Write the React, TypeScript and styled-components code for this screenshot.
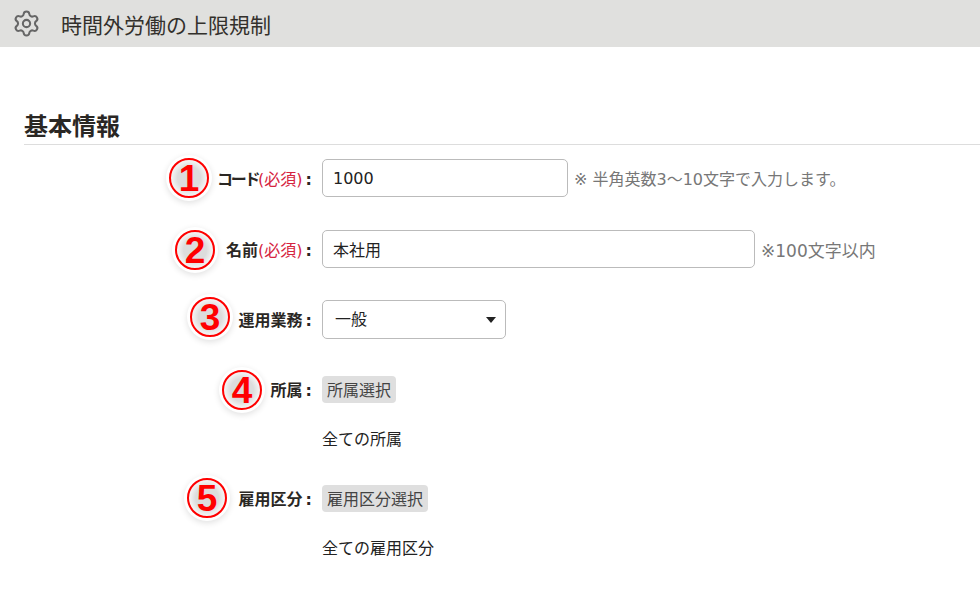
import React from 'react'
import styled, { createGlobalStyle } from 'styled-components'
import { Settings } from 'lucide-react'

const GlobalStyle = createGlobalStyle`
  html, body {
    margin: 0;
    padding: 0;
    background: #fff;
    overflow: hidden;
  }

  body {
    font-family: "DejaVu Sans", "Noto Sans CJK JP", sans-serif;
    color: #222;
  }
`

const Header = styled.header`
  display: flex;
  align-items: center;
  height: 47px;
  padding-left: 12px;
  background: #e0e0de;
`

const GearIcon = styled(Settings)`
  width: 29px;
  height: 29px;
  color: #666;
  margin-right: 20px;
`

const PageTitle = styled.h1`
  margin: 0;
  font-size: 21px;
  font-weight: 400;
  color: #33302c;
`

const Main = styled.main`
  padding: 61px 0 0 24px;
`

const SectionTitle = styled.h2`
  margin: 0 0 13px;
  height: 36px;
  line-height: 38px;
  font-size: 24px;
  font-weight: 700;
  color: #2a2724;
  border-bottom: 1px solid #ddd;
`

const Form = styled.form`
  display: flex;
  flex-direction: column;
`

const Row = styled.div<{ $top?: number }>`
  display: grid;
  grid-template-columns: 288px auto;
  column-gap: 10px;
  align-items: center;
  justify-content: start;
  height: 40px;
  margin-top: ${props => props.$top ?? 0}px;
`

const Label = styled.label`
  display: flex;
  justify-content: flex-end;
  font-size: 16px;
  font-weight: 700;
  color: #2a2724;
`

const LabelText = styled.span`
  position: relative;
  white-space: nowrap;
`

const Colon = styled.span`
  margin-left: 3px;
`

const Kana = styled.span`
  letter-spacing: -2.3px;
`

const Required = styled.span`
  font-weight: 400;
  color: #d6243f;
`

const Badge = styled.span<{ $right: number; $shift: number }>`
  position: absolute;
  top: 50%;
  right: ${props => props.$right}px;
  width: 40px;
  height: 40px;
  margin-top: ${props => props.$shift - 20}px;
  box-sizing: border-box;
  display: flex;
  align-items: center;
  justify-content: center;
  border: 2px solid #f00;
  border-radius: 50%;
  background: radial-gradient(circle, #dcdcdc 0 45%, #f0f0f0 65%, #fff 85%);
  box-shadow: 0 0 0 3px #fff, 0 2px 6px 3px rgba(0, 0, 0, 0.12);
  font-family: "Liberation Sans", Arial, sans-serif;
  font-size: 37px;
  font-weight: 700;
  line-height: 1;
  color: #f00;
`

const Field = styled.div`
  display: flex;
  align-items: center;
`

const TextInput = styled.input<{ $width: number }>`
  box-sizing: border-box;
  width: ${props => props.$width}px;
  height: 38px;
  padding: 0 10px;
  border: 1px solid #bbb;
  border-radius: 5px;
  outline: none;
  background: #fff;
  font-family: inherit;
  font-size: 16px;
  color: #222;
`

const Hint = styled.span<{ $size?: number }>`
  margin-left: 6px;
  font-size: ${props => props.$size ?? 16}px;
  color: #777;
`

const SelectWrap = styled.div`
  position: relative;
  width: 184px;
  height: 39px;

  &::after {
    content: '';
    position: absolute;
    top: 17px;
    right: 10px;
    border-top: 6px solid #222;
    border-left: 5px solid transparent;
    border-right: 5px solid transparent;
    pointer-events: none;
  }
`

const Select = styled.select`
  appearance: none;
  box-sizing: border-box;
  width: 100%;
  height: 100%;
  padding: 0 12px;
  border: 1px solid #bbb;
  border-radius: 5px;
  outline: none;
  background: #fff;
  font-family: inherit;
  font-size: 16px;
  color: #222;
`

const PickButton = styled.button`
  height: 27px;
  padding: 0 5px;
  border: 0;
  border-radius: 4px;
  background: #dfdfdf;
  font-family: inherit;
  font-size: 16px;
  color: #444;
`

const Note = styled.div`
  grid-column: 2;
  font-size: 16px;
  color: #222;
`

export default function App() {
  return (
    <>
      <GlobalStyle />
      <Header>
        <GearIcon strokeWidth={1.7} />
        <PageTitle>時間外労働の上限規制</PageTitle>
      </Header>
      <Main>
        <SectionTitle>基本情報</SectionTitle>
        <Form onSubmit={e => e.preventDefault()}>
          <Row>
            <Label>
              <LabelText>
                <Badge $right={103} $shift={0}>1</Badge>
                <Kana>コード</Kana><Required>(必須)</Required><Colon>:</Colon>
              </LabelText>
            </Label>
            <Field>
              <TextInput $width={246} defaultValue="1000" />
              <Hint>※ 半角英数3～10文字で入力します。</Hint>
            </Field>
          </Row>
          <Row $top={31}>
            <Label>
              <LabelText>
                <Badge $right={97} $shift={1}>2</Badge>
                名前<Required>(必須)</Required><Colon>:</Colon>
              </LabelText>
            </Label>
            <Field>
              <TextInput $width={433} defaultValue="本社用" />
              <Hint $size={17}>※100文字以内</Hint>
            </Field>
          </Row>
          <Row $top={30}>
            <Label>
              <LabelText>
                <Badge $right={82} $shift={-2}>3</Badge>
                運用業務<Colon>:</Colon>
              </LabelText>
            </Label>
            <SelectWrap>
              <Select defaultValue="一般">
                <option>一般</option>
              </Select>
            </SelectWrap>
          </Row>
          <Row $top={30}>
            <Label>
              <LabelText>
                <Badge $right={50} $shift={1}>4</Badge>
                所属<Colon>:</Colon>
              </LabelText>
            </Label>
            <Field>
              <PickButton type="button">所属選択</PickButton>
            </Field>
          </Row>
          <Row $top={9}>
            <Note>全ての所属</Note>
          </Row>
          <Row $top={20}>
            <Label>
              <LabelText>
                <Badge $right={85} $shift={0}>5</Badge>
                雇用区分<Colon>:</Colon>
              </LabelText>
            </Label>
            <Field>
              <PickButton type="button">雇用区分選択</PickButton>
            </Field>
          </Row>
          <Row $top={9}>
            <Note>全ての雇用区分</Note>
          </Row>
        </Form>
      </Main>
    </>
  )
}
